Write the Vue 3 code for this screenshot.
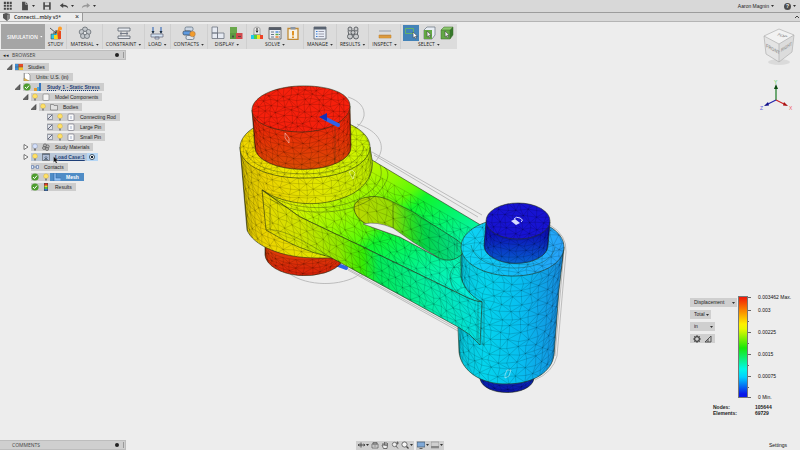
<script setup>
import { ref } from 'vue'

let seed = 7
const random = () => (seed = (seed * 16807) % 2147483647) / 2147483647

// Triangulated grid over a parametric surface, as one path string
function mesh(surface, cols, rows, jitter = 0.22) {
  const pts = []
  for (let r = 0; r <= rows; r++) {
    const line = []
    for (let c = 0; c <= cols; c++) {
      const du = c > 0 && c < cols ? (random() - 0.5) * 2 * jitter : 0
      const dv = r > 0 && r < rows ? (random() - 0.5) * 2 * jitter : 0
      const [x, y] = surface((c + du) / cols, (r + dv) / rows)
      line.push(x.toFixed(1) + ' ' + y.toFixed(1))
    }
    pts.push(line)
  }
  let d = ''
  for (let r = 0; r <= rows; r++) d += 'M' + pts[r].join('L')
  for (let c = 0; c <= cols; c++) d += 'M' + pts.map((l) => l[c]).join('L')
  for (let r = 0; r < rows; r++) {
    for (let c = 0; c < cols; c++) {
      d += (r + c) % 2
        ? `M${pts[r][c]}L${pts[r + 1][c + 1]}`
        : `M${pts[r][c + 1]}L${pts[r + 1][c]}`
    }
  }
  return d
}

// Front half of a cylinder between two ellipses [cx, cy, rx, ry]
const wall = (a, b) => (u, v) => {
  const t = Math.PI * (1 - u)
  const at = (e) => [e[0] + e[2] * Math.cos(t), e[1] + e[3] * Math.sin(t)]
  const p = at(a)
  const q = at(b)
  return [p[0] + (q[0] - p[0]) * v, p[1] + (q[1] - p[1]) * v]
}
const plane = (x, y, ax, ay, bx, by) => (u, v) => [x + ax * u + bx * v, y + ay * u + by * v]

const armTop = 'M262 190C285 205 320 209 350 195C364 188 374 176 372 160L484 227L478 246L461 250V275C461 284 470 296 482 302C476 302 472 300 468 298L363 247L300 217Z'
const armFront = 'M262 190L300 217L363 247L468 298Q474 301 482 302L480 345Q470 333 458 327L400 295L330 257Q298 250 266 230Z'
const slot = 'M354 208C354 202 360 198 368 197C378 195 388 199 393 202L413 212L457 240L463 245L462 254C455 261 446 262 437 257L400 237L380 230C368 226 355 220 354 208Z'

const lower = [
  { id: 'redBase', fill: 'url(#gRedBase)', d: 'M265 244V255A40 22 0 0 0 342 262V244Z', mesh: mesh(wall([304, 244, 39, 16], [304, 255, 39, 22]), 16, 4) },
  { id: 'blueBase', fill: 'url(#gBlueBase)', d: 'M480 372V379C484 397 530 397 534 379V372Z', mesh: mesh(wall([507, 370, 27, 16], [507, 377, 27, 16]), 12, 2) },
  { id: 'body', fill: 'url(#gBody)', d: 'M240 147L247 230C253 245 280 258 317 258L332 258L380 230L372 160L370 147Z', mesh: mesh(wall([305, 147, 65, 31], [312, 228, 65, 31]), 22, 12) },
  { id: 'hub', fill: 'url(#gHub)', d: 'M461 248L458 328L459 352C461 371 482 385 507 384C533 384 552 372 554 355L559 290L564 247Z', mesh: mesh(wall([513, 247, 51, 29], [507, 355, 48, 29]), 16, 15) },
  { id: 'armTop', fill: 'url(#gArm)', d: armTop, mesh: mesh(plane(262, 110, 240, 136, 0, 110), 34, 14, 0.3) },
  { id: 'armFront', fill: 'url(#gFront)', d: armFront, mesh: mesh(plane(262, 188, 220, 112, 3, 44), 30, 6) },
  { id: 'slot', fill: 'url(#gSlot)', d: slot, mesh: mesh(plane(350, 180, 115, 62, 0, 50), 13, 6) }
]

const upper = [
  { id: 'hubTop', fill: 'url(#gHubTop)', d: 'M461 247C461 231 484 218 513 218C542 218 564 231 564 247C564 263 542 276 513 276C484 276 461 263 461 247Z', mesh: mesh(plane(455, 215, 115, 0, 0, 64), 13, 9, 0.3) },
  { id: 'bluePin', fill: 'url(#gBluePin)', d: 'M486 222L484 245A32 18 0 0 0 548 246L550 222Z', mesh: mesh(wall([518, 222, 32, 18], [516, 245, 32, 18]), 12, 4) },
  { id: 'bluePinTop', fill: '#1713d2', d: 'M486 221A32 18 0 1 1 550 221A32 18 0 1 1 486 221Z', mesh: mesh(plane(484, 202, 68, 2, 0, 38), 9, 6, 0.3) },
  { id: 'collarWall', fill: 'url(#gBody)', plain: true, d: 'M370 147L372 160C373 176 355 192 325 196C302 199 280 195 268 190L240 147Z', mesh: mesh(wall([305, 147, 65, 31], [307, 163, 65, 33]), 24, 3) },
  { id: 'collarTop', fill: 'url(#gCollar)', d: 'M240 148C240 130 266 117 302 116C340 115 370 129 370 147C370 164 342 178 306 178C270 179 240 166 240 148Z', mesh: mesh(plane(236, 114, 138, -2, 0, 66), 23, 12, 0.3) },
  { id: 'redPin', fill: 'url(#gRed)', d: 'M252 110L255 148A48 22 0 0 0 351 147L350 106Z', mesh: mesh(wall([301, 109, 49, 23], [303, 147, 48, 22]), 18, 7) },
  { id: 'redPinTop', fill: '#f5200c', d: 'M252 111C251 98 272 87 299 86C328 85 350 93 350 106C350 120 329 131 303 132C275 132 253 124 252 111Z', mesh: mesh(plane(250, 85, 102, -2, 0, 49), 15, 9, 0.3) }
]

const icons = {
  grid: '<path d="M1 1h2.500v2.500H1zM4.500 1H7v2.500H4.500zM8 1h2.500v2.500H8zM1 4.500h2.500V7H1zM4.500 4.500H7V7H4.500zM8 4.500h2.500V7H8zM1 8h2.500v2.500H1zM4.500 8H7v2.500H4.500zM8 8h2.500v2.500H8z" fill="#444"/>',
  file: '<path d="M2.500 1h4l3 3v7h-7z" fill="#4a4a4a"/><path d="M6.500 1v3h3" stroke="#ddd" fill="none" stroke-width=".7"/>',
  save: '<path d="M1.500 1.500h9v9h-9z" fill="#4a4a4a"/><path d="M3.500 1.500h5v3.500h-5zM3.500 7h5v3.500h-5z" fill="#d8d8d8"/>',
  undo: '<path d="M1 5.500 5 2.500v2c4 0 6 1.500 6 4.500-1-2-3-2.500-6-2.500v2z" fill="#444"/>',
  redo: '<path d="M11 5.500 7 2.500v2c-4 0-6 1.500-6 4.500 1-2 3-2.500 6-2.500v2z" fill="#999"/>',
  study: '<path d="M2 8h5V5h4v8H2z" fill="#2fc7e8" stroke="#333" stroke-width=".5"/><path d="M5 9h3V6h3v7H5z" fill="#f6d51f"/><path d="M8 5h4v8H9z" fill="#e8481c"/><path d="m8 7 3-5" stroke="#e8801c" stroke-width="2"/><circle cx="11" cy="2.500" r="2" fill="#ff9b25"/><path d="m1 2 6 5M7 7V4M7 7H4" stroke="#333" stroke-width=".8" fill="none"/>',
  material: '<g fill="#c4c8cc" stroke="#666c72" stroke-width=".8"><circle cx="7" cy="3.600" r="2.600"/><circle cx="3.700" cy="6" r="2.500"/><circle cx="10.400" cy="6" r="2.500"/><circle cx="5" cy="10" r="2.500"/><circle cx="9" cy="10" r="2.500"/><circle cx="7" cy="7" r="1.800" fill="#e4e6e8"/></g>',
  constraint: '<path d="M1 2h12v3H1zM1 10h12v2.500H1z" fill="#e6e9ef" stroke="#59606b" stroke-width=".8"/><path d="M4 5.500v4M10 5.500v4M3 7.500h8" stroke="#6b7280" stroke-width=".9"/>',
  load: '<path d="M1 8h12v3H1zM5 11h4v2H5z" fill="#d4e4f4" stroke="#667" stroke-width=".7"/><path d="M3 1v6M11 1v6" stroke="#225bb0" stroke-width="1"/><path d="M1.500 5h3L3 8zM9.500 5h3L11 8z" fill="#234"/>',
  contacts: '<rect x="3" y="1" width="8" height="4" rx="1.500" fill="#cdd7e4" stroke="#567" stroke-width=".7"/><rect x="1" y="5" width="8" height="4" rx="1.500" fill="#5f9be0" stroke="#345" stroke-width=".7"/><rect x="4" y="9.500" width="8" height="4" rx="1.500" fill="#dfe5ec" stroke="#567" stroke-width=".7"/><circle cx="10.500" cy="8" r="2.800" fill="#f29c2c" stroke="#865" stroke-width=".4"/>',
  display: '<path d="M1 1h5.500v6H1zM1 7h5.500v5.500H1zM6.500 7H13v5.500H6.500z" fill="#e6eaf2" stroke="#6d7480" stroke-width=".8"/>',
  blocks: '<path d="M1 1h7v6H1z" fill="#6aa84c"/><path d="M1 7h6v6H1z" fill="#5c9a42"/><path d="M7 7h6.500v6H7z" fill="#d0494d"/><path d="M4 9v3M3 10.500h2M9 10.500h3" stroke="#444" stroke-width=".8"/>',
  solve: '<path d="M1 9h12v4H1z" fill="#20c8ef"/><path d="M4 9h3v4H4z" fill="#52d243"/><path d="M7 9h3v4H7z" fill="#f4df23"/><path d="M10 9h3v4h-3z" fill="#ed4327"/><path d="M3 8.500h8M4 8V3c0-2.500 6-2.500 6 0v5" fill="#e8e8e8" stroke="#888" stroke-width=".7"/><path d="M7 2v2" stroke="#222"/><path d="M5.500 4.500h3L7 7z" fill="#222"/>',
  table: '<path d="M1 1.500h12v11.500H1z" fill="#edf0f4" stroke="#555" stroke-width=".8"/><path d="M1 1.500h12V4H1z" fill="#555c68"/><path d="M3 6h3M3 8.500h3M3 11h3M11 6h1M11 8.500h1M11 11h1" stroke="#678" stroke-width="1.100"/><path d="M7.500 6h3" stroke="#4c8fe0" stroke-width="1.500"/><path d="M7.500 8.500h3" stroke="#5cae4c" stroke-width="1.500"/><path d="M7.500 11h3" stroke="#e97b2c" stroke-width="1.500"/>',
  report: '<path d="M2 2.500h10v11H2z" fill="#f7f2e5" stroke="#c18a35" stroke-width="1.300"/><path d="M4.500 1h5v2.500h-5z" fill="#8a97a8"/><path d="M7 5v4.500" stroke="#e09324" stroke-width="2"/><path d="M6 10.500h2v1.500H6z" fill="#e09324"/>',
  manage: '<path d="M1 1h12v12H1z" fill="#e8edf6" stroke="#555e6b" stroke-width=".8"/><path d="M1 1h12v2.500H1z" fill="#596371"/><path d="M3 5.500h1.500M3 8h1.500M3 10.500h1.500" stroke="#357bd2" stroke-width="1.200"/><path d="M5.500 5.500H11M5.500 8H11M5.500 10.500H11" stroke="#889" stroke-width=".8"/>',
  results: '<g fill="#c8cacc" stroke="#55595e" stroke-width=".9"><path d="M2 4.500 3 10M12 4.500 11 10M5 10h4"/><circle cx="4" cy="3" r="2"/><circle cx="10" cy="3" r="2"/><circle cx="7" cy="6.500" r="2"/><circle cx="4" cy="10.500" r="2.500"/><circle cx="10" cy="10.500" r="2.500"/></g>',
  inspect: '<path d="M1 4h12v2H1z" fill="#b9bdc3"/><path d="M1 9h12v3H1z" fill="#e7a33c" stroke="#b7782b" stroke-width=".5"/><path d="M3 9v1.500M5 9v1.500M7 9v1.500M9 9v1.500M11 9v1.500" stroke="#865" stroke-width=".5"/>',
  select: '<path d="M1.500 2.500h8v5h-8z" fill="none" stroke="#64b267" stroke-width="1"/><path d="m9 6 .200 6 1.400-1.200 1 2 .900-.500-1-2 1.800-.200z" fill="#fff" stroke="#333" stroke-width=".5"/>',
  cubeFace: '<path d="M2 4 5 1h8v8l-3 4H2z" fill="#e8edf4" stroke="#66717b" stroke-width=".7"/><path d="M2 4h8v9H2z" fill="#62a844"/><path d="m5 5 .200 6 1.300-1.200 1 2 .900-.500-1-2 1.800-.200z" fill="#eee" stroke="#333" stroke-width=".5"/>',
  cube: '<path d="M1 4h9v9H1z" fill="#62a844"/><path d="M1 4 4 1h9l-3 3z" fill="#8cc86f"/><path d="m10 4 3-3v8l-3 4z" fill="#36792b"/><path d="M1 4 4 1h9v8l-3 4H1zM1 4h9v9M10 4l3-3" fill="none" stroke="#3c692b" stroke-width=".5"/><path d="m5 5 .200 6 1.300-1.200 1 2 .900-.500-1-2 1.800-.200z" fill="#eee" stroke="#333" stroke-width=".5"/>',
  studies: '<path d="M0 1h3.500v6H0z" fill="#3f8fd5"/><path d="M3.500 1H8v3H3.500z" fill="#e64b26"/><path d="M3.500 4H8v3H3.500z" fill="#f0bd2a"/><path d="M0 4h8M3.500 1v6" stroke="#555" stroke-width=".5"/>',
  units: '<path d="M1.500 0H5l2 2v6H1.500z" fill="#fff" stroke="#777" stroke-width=".6"/><path d="M1 5v3h5z" fill="#e5b94f" stroke="#8d7433" stroke-width=".4"/>',
  check: '<circle cx="4" cy="4" r="3.600" fill="#4e9d2f"/><path d="m2 4 1.500 1.600L6 2.600" fill="none" stroke="#fff" stroke-width="1"/>',
  stress: '<path d="M0 5h3v3H0z" fill="#e49b32"/><path d="M3 4h2v4H3z" fill="#4fa8dc"/><path d="M5 0h2v8H5z" fill="#3775bd"/>',
  bulb: '<circle cx="4" cy="3.200" r="2.400" fill="#ffe168" stroke="#c8a63a" stroke-width=".4"/><path d="M3 5.500h2v2H3z" fill="#888"/>',
  bulbOff: '<circle cx="4" cy="3.200" r="2.400" fill="#d6e1fb" stroke="#7283a8" stroke-width=".4"/><path d="M3 5.500h2v2H3z" fill="#777"/>',
  part: '<rect x="1" y="1" width="6" height="6.500" rx="1" fill="#f4f4f4" stroke="#777" stroke-width=".6"/>',
  body: '<rect x="1" y="1" width="6" height="6.500" rx="1" fill="#fafafa" stroke="#667" stroke-width=".6"/><path d="M4 3v3" stroke="#7d8fb5" stroke-width=".7"/>',
  folder: '<path d="M.500 1.500h3l.500 1h3.500v4.500h-7z" fill="#e1e1e1" stroke="#666" stroke-width=".6"/>',
  materials: '<g fill="#bbb" stroke="#555" stroke-width=".7"><circle cx="3" cy="2.500" r="1.600"/><circle cx="2" cy="5" r="1.500"/><circle cx="5.600" cy="3.500" r="1.600"/><circle cx="5" cy="6" r="1.500"/></g>',
  loadcase: '<path d="M.500.500h7v7h-7z" fill="#aebdd6" stroke="#555" stroke-width=".6"/><path d="M.500 1.500h7M4 3v3M2.500 4.500 4 6l1.500-1.500M2 6.500h4" stroke="#345" stroke-width=".6" fill="none"/>',
  contact: '<path d="M.500 2.500h2v3h-2zM5.500 2.500h2v3h-2z" fill="#dce8fa" stroke="#5472a8" stroke-width=".6"/><path d="M3 4h2" stroke="#5472a8" stroke-width=".8"/>',
  mesh: '<path d="M1 0h2v5h5v3H1z" fill="#8fc0f3" stroke="#285f9d" stroke-width=".5"/>',
  results2: '<path d="M2 0h4v8H2z" fill="#444"/><path d="M2.500.500h3v2h-3z" fill="#ed3924"/><path d="M2.500 2.500h3v1.500h-3z" fill="#f6d82a"/><path d="M2.500 4h3v2h-3z" fill="#53c247"/><path d="M2.500 6h3v1.500h-3z" fill="#2c7be0"/>',
  orbit: '<path d="M1 4h7M4 1.500v5M2.500 3 1 4l1.500 1M6.500 3 8 4 6.500 5" stroke="#444" stroke-width=".9" fill="none"/>',
  look: '<path d="M1 3h6v4H1zM2 1.500h4V3H2z" fill="#ddd" stroke="#555" stroke-width=".7"/><path d="M2.500 5h3" stroke="#555" stroke-width=".7"/>',
  hand: '<path d="M2 4V2M3.500 4V1M5 4V1M6.500 4.500V2M2 4l-1 0 1.500 3.500h3.500l.500-3z" stroke="#555" fill="#eee" stroke-width=".8"/>',
  zoomDrag: '<circle cx="3.500" cy="3.500" r="2.200" fill="#eee" stroke="#555" stroke-width=".7"/><path d="m5 5 2 2.500M6.500.500v3M5 2h3" stroke="#555" stroke-width=".8"/>',
  zoom: '<circle cx="3.500" cy="3.500" r="2.600" fill="#f7f7f7" stroke="#555" stroke-width=".8"/><path d="m5.500 5.500 2 2" stroke="#444" stroke-width="1.200"/>',
  screen: '<path d="M0 1h8v5H0z" fill="#7fa9d8" stroke="#456" stroke-width=".7"/><path d="M2.500 7.500h3" stroke="#555" stroke-width=".9"/>',
  layout: '<path d="M0 1h8v6H0z" fill="#d0d0d0" stroke="#888" stroke-width=".6"/><path d="M0 5h8v2H0z" fill="#888"/>',
  gear: '<circle cx="4" cy="4" r="2.400" fill="none" stroke="#444" stroke-width="1.200"/><path d="M4 0v1.500M4 6.500V8M0 4h1.500M6.500 4H8M1.200 1.200l1 1M5.800 5.800l1 1M6.800 1.200l-1 1M2.200 5.800l-1 1" stroke="#444" stroke-width=".9"/>',
  angle: '<path d="M1 7h6V1zM4 7V4" fill="none" stroke="#444" stroke-width=".9"/>'
}

const quick = [
  { icon: 'grid', name: 'Data panel' },
  { icon: 'file', name: 'File', menu: true },
  { icon: 'save', name: 'Save' },
  { icon: 'undo', name: 'Undo', menu: true },
  { icon: 'redo', name: 'Redo', menu: true }
]

const tools = [
  { label: 'STUDY', icons: ['study'] },
  { label: 'MATERIAL', icons: ['material'], menu: true },
  { label: 'CONSTRAINT', icons: ['constraint'], menu: true },
  { label: 'LOAD', icons: ['load'], menu: true },
  { label: 'CONTACTS', icons: ['contacts'], menu: true },
  { label: 'DISPLAY', icons: ['display', 'blocks'], menu: true },
  { label: 'SOLVE', icons: ['solve', 'table', 'report'], menu: true },
  { label: 'MANAGE', icons: ['manage'], menu: true },
  { label: 'RESULTS', icons: ['results'], menu: true },
  { label: 'INSPECT', icons: ['inspect'], menu: true },
  { label: 'SELECT', icons: ['select', 'cubeFace', 'cube'], menu: true }
]

const tree = [
  { label: 'Studies', level: 0, open: true, icons: ['studies'] },
  { label: 'Units: U.S. (in)', level: 1, icons: ['units'] },
  { label: 'Study 1 - Static Stress', level: 1, open: true, icons: ['check', 'stress'], kind: 'active' },
  { label: 'Model Components', level: 2, open: true, icons: ['bulb', 'part'] },
  { label: 'Bodies', level: 3, open: true, icons: ['bulb', 'folder'] },
  { label: 'Connecting Rod', level: 4, tick: true, icons: ['bulb', 'body'] },
  { label: 'Large Pin', level: 4, tick: true, icons: ['bulb', 'body'] },
  { label: 'Small Pin', level: 4, tick: true, icons: ['bulb', 'body'] },
  { label: 'Study Materials', level: 2, open: false, icons: ['bulbOff', 'materials'] },
  { label: 'Load Case:1', level: 2, open: false, icons: ['bulb', 'loadcase'], kind: 'hover' },
  { label: 'Contacts', level: 2, icons: ['contact'] },
  { label: 'Mesh', level: 2, icons: ['check', 'bulb', 'mesh'], kind: 'selected' },
  { label: 'Results', level: 2, icons: ['check', 'results2'] }
]

const scale = [
  { text: '0.003462 Max.', span: 13 },
  { text: '0.003', span: 22, minor: true },
  { text: '0.00225', span: 22, minor: true },
  { text: '0.0015', span: 22, minor: true },
  { text: '0.00075', span: 21, minor: true },
  { text: '0 Min.', span: 0 }
]

const navigation = [
  [
    { icon: 'orbit', name: 'Orbit', menu: true },
    { icon: 'look', name: 'Look at' },
    { icon: 'hand', name: 'Pan' },
    { icon: 'zoomDrag', name: 'Zoom' },
    { icon: 'zoom', name: 'Fit', menu: true }
  ],
  [
    { icon: 'screen', name: 'Display settings', menu: true },
    { icon: 'layout', name: 'Viewports', menu: true }
  ]
]

const ticks = ref(['Connecting Rod', 'Large Pin', 'Small Pin'])
</script>

<template>
  <div class="app">
    <header class="titlebar">
      <button v-for="q in quick" :key="q.icon" class="plain quick" :aria-label="q.name">
        <svg class="i10" viewBox="0 0 12 12" v-html="icons[q.icon]"></svg>
        <span v-if="q.menu" class="caret"></span>
      </button>
      <span class="grow"></span>
      <button class="plain user">Aaron Magnin <span class="caret"></span></button>
      <button class="plain help" aria-label="Help">
        <span class="mark">?</span><span class="caret"></span>
      </button>
    </header>

    <nav class="tabs">
      <div class="tab">
        <svg class="i8" viewBox="0 0 8 8"><path d="M0 1 3 0l4 1v4L4 8 0 5z" fill="#555" /><path d="M4 2v6l3-3V1z" fill="#888" /></svg>
        <span class="tab-name">Connecti...mbly v3*</span>
        <button class="plain close" aria-label="Close tab">×</button>
      </div>
      <button class="plain collapse" aria-label="Collapse toolbar">
        <svg class="i6" viewBox="0 0 6 6"><path d="m1 4 2-2 2 2" fill="none" stroke="#444" /></svg>
      </button>
    </nav>

    <main class="workspace">
      <svg class="stage" viewBox="0 22 800 428" role="img" aria-label="Displacement results on the connecting rod">
        <defs>
          <linearGradient id="gRed" x1="0" y1="0" x2="0" y2="1"><stop offset=".3" stop-color="#ec2708" /><stop offset="1" stop-color="#d94b04" /></linearGradient>
          <linearGradient id="gRedBase" x1="0" y1="0" x2="0" y2="1"><stop offset="0" stop-color="#de4408" /><stop offset="1" stop-color="#d92008" /></linearGradient>
          <linearGradient id="gBody" gradientUnits="userSpaceOnUse" x1="240" y1="170" x2="375" y2="170"><stop offset="0" stop-color="#d3bc00" /><stop offset=".2" stop-color="#ecd400" /><stop offset=".6" stop-color="#e2e800" /><stop offset="1" stop-color="#b8ea00" /></linearGradient>
          <linearGradient id="gCollar" gradientUnits="userSpaceOnUse" x1="240" y1="130" x2="370" y2="150"><stop offset="0" stop-color="#f0d400" /><stop offset=".5" stop-color="#ecee00" /><stop offset="1" stop-color="#c6f500" /></linearGradient>
          <linearGradient id="gArm" gradientUnits="userSpaceOnUse" x1="262" y1="190" x2="409" y2="353"><stop offset="0" stop-color="#f2e800" /><stop offset=".16" stop-color="#d9f400" /><stop offset=".34" stop-color="#9af800" /><stop offset=".46" stop-color="#5cfa08" /><stop offset=".52" stop-color="#10f52c" /><stop offset=".66" stop-color="#04f56c" /><stop offset=".8" stop-color="#06f4a6" /><stop offset="1" stop-color="#06eee0" /></linearGradient>
          <linearGradient id="gFront" gradientUnits="userSpaceOnUse" x1="262" y1="0" x2="482" y2="0"><stop offset="0" stop-color="#e8d800" /><stop offset=".18" stop-color="#cde400" /><stop offset=".35" stop-color="#8fe800" /><stop offset=".46" stop-color="#35ea05" /><stop offset=".53" stop-color="#04e956" /><stop offset=".75" stop-color="#04eda0" /><stop offset="1" stop-color="#04dce4" /></linearGradient>
          <linearGradient id="gSlot" gradientUnits="userSpaceOnUse" x1="354" y1="0" x2="463" y2="0"><stop offset="0" stop-color="#bcd800" /><stop offset=".35" stop-color="#94dc04" /><stop offset=".52" stop-color="#30dc20" /><stop offset=".65" stop-color="#04d448" /><stop offset="1" stop-color="#06dc96" /></linearGradient>
          <linearGradient id="gHub" gradientUnits="userSpaceOnUse" x1="458" y1="0" x2="564" y2="0"><stop offset="0" stop-color="#08c4d8" /><stop offset=".25" stop-color="#05d4ec" /><stop offset=".6" stop-color="#08bdf0" /><stop offset="1" stop-color="#1688dc" /></linearGradient>
          <linearGradient id="gHubTop" gradientUnits="userSpaceOnUse" x1="461" y1="0" x2="564" y2="0"><stop offset="0" stop-color="#0cd8f2" /><stop offset=".5" stop-color="#12bdf8" /><stop offset="1" stop-color="#28a2fa" /></linearGradient>
          <linearGradient id="gBluePin" x1="0" y1="0" x2="0" y2="1"><stop offset=".3" stop-color="#0c12b8" /><stop offset="1" stop-color="#0660d0" /></linearGradient>
          <linearGradient id="gBlueBase" x1="0" y1="0" x2="0" y2="1"><stop offset="0" stop-color="#0838c8" /><stop offset="1" stop-color="#0c12a8" /></linearGradient>
          <clipPath v-for="s in [...lower, ...upper]" :id="'c-' + s.id" :key="s.id"><path :d="s.d" /></clipPath>
        </defs>

        <g class="ghost">
          <path d="M348 97C360 101 365 108 364 116C362 126 350 134 336 137" />
          <path d="M357 124C376 130 383 141 381 151C379 160 372 166 362 170M372 152L482 215M374 155L478 217" />
          <path d="M282 266C292 282 324 288 348 280Q358 277 362 271V276M332 260L460 330M348 270L458 331" />
          <path d="M550 225Q567 235 566 252L557 356Q553 372 535 380M548 228Q565 238 564 250L555 356" />
        </g>
        <path d="m338 265 8 3" class="arrow" />

        <g v-for="s in lower" :key="s.id">
          <path :d="s.d" :fill="s.fill" class="face" />
          <path :d="s.mesh" class="wires" :clip-path="'url(#c-' + s.id + ')'" />
        </g>

        <path class="gap" d="M363 224Q377 221 393 228L413 242L437 257L400 237L380 230Z" />
        <g class="edges">
          <path d="M393 202V228M457 240V252M460 262C449 268 446 281 457 292M264 204L270 208V229M266 230C280 228 300 238 330 257" />
          <path d="M478 300V343M484 300V346M262 190C290 214 345 212 368 193C378 185 384 178 380 165M270 199C300 220 358 214 377 194C390 180 390 172 384 167" />
        </g>

        <g v-for="s in upper" :key="s.id">
          <path :d="s.d" :fill="s.fill" :class="{ face: !s.plain }" />
          <path :d="s.mesh" class="wires" :clip-path="'url(#c-' + s.id + ')'" />
        </g>
        <g class="edges">
          <path d="M335 128V164M246 150C248 165 272 174 306 174C338 173 362 162 364 146M370 147L372 160" />
          <path d="M471 245C474 260 492 268 514 268C536 268 553 260 555 247" />
        </g>

        <path d="m324 118 14 7" class="arrow" />
        <path d="m319 117 8-4 0 8z" fill="#1230b8" />
        <g class="tags">
          <path d="M285 133v5l4 5v-5zM349 172l3-2 3 3-2 6zM505 375l2-5h4l-2 6-4 2z" />
        </g>
        <path d="m511 221 4-2 5 4-4 2z" class="lock-body" />
        <path d="M514 219q2-3 6-1 4 2 1 4" class="lock-ring" />
      </svg>

      <div class="left">
        <div class="toolbar">
          <button class="workspace-switch">SIMULATION <span class="caret light"></span></button>
          <div v-for="t in tools" :key="t.label" class="group">
            <div class="group-icons">
              <button v-for="i in t.icons" :key="i" class="plain tool" :class="{ on: i === 'select' }" :aria-label="t.label">
                <svg class="i14" viewBox="0 0 14 14" v-html="icons[i]"></svg>
              </button>
            </div>
            <div class="group-label">{{ t.label }}<span v-if="t.menu" class="caret"></span></div>
          </div>
        </div>

        <section class="browser">
          <div class="panel-head">
            <span class="rewind">◂◂</span><span>BROWSER</span><span class="grow"></span>
            <button class="plain dot" aria-label="Browser options"></button><span class="grip"></span>
          </div>
          <ul class="tree">
            <li v-for="n in tree" :key="n.label" :class="['node', 'l' + n.level, n.kind]">
              <button v-if="n.open !== undefined" class="plain twist" :aria-label="'Toggle ' + n.label">
                <svg class="i6" viewBox="0 0 6 6">
                  <path v-if="n.open" d="M5 .5v5H0z" fill="#666" stroke="#333" stroke-width=".6" />
                  <path v-else d="M1 .5 5 3 1 5.500z" fill="#fff" stroke="#444" stroke-width=".7" />
                </svg>
              </button>
              <span v-else class="twist"></span>
              <label class="chip">
                <input v-if="n.tick" v-model="ticks" type="checkbox" :value="n.label" />
                <svg v-for="i in n.icons" :key="i" class="i8" viewBox="0 0 8 8" v-html="icons[i]"></svg>
                <span class="name">{{ n.label }}</span>
              </label>
              <span v-if="n.kind === 'hover'" class="target"><i></i></span>
              <svg v-if="n.kind === 'hover'" class="pointer" viewBox="0 0 6 8"><path d="M.500.500v6l1.500-1.300 1 2.300 1.200-.500-1-2.200H5.500z" fill="#111" stroke="#eee" stroke-width=".3" /></svg>
            </li>
          </ul>
        </section>
      </div>

      <aside class="right">
        <svg class="viewcube" viewBox="0 0 34 40" role="img" aria-label="View cube">
          <ellipse cx="17" cy="34" rx="11" ry="3" fill="#dadada" />
          <path d="M2 8 17 1l15 6-15 9z" fill="#f2f2f2" />
          <path d="M2 8 17 16v18L4 26z" fill="#e4e4e4" />
          <path d="M32 7 17 16v18l13-10z" fill="#dcdcdc" />
          <path d="M2 8 17 1l15 6-2 17-13 10L4 26zM2 8l15 8 15-9M17 16v18" fill="none" stroke="#b0b0b0" stroke-width=".7" />
          <text class="cube-text" transform="matrix(.8 .45 0 1 4 19)">FRONT</text>
          <text class="cube-text" transform="matrix(.7 -.45 0 1 19 24)">RIGHT</text>
          <text class="cube-text" transform="matrix(.9 .3 -.8 .5 14 7)">TOP</text>
        </svg>
        <svg class="axes" viewBox="0 0 36 32" role="img" aria-label="Axes">
          <path d="M18 20V8" stroke="#187a20" stroke-width="1.200" /><path d="m16 9 2-5 2 5z" fill="#0b4a12" />
          <path d="m18 20 8 4" stroke="#c22" stroke-width="1.200" /><path d="m26 22 4 4-5-.500z" fill="#a11" />
          <path d="m18 20-8 4" stroke="#22a" stroke-width="1.200" /><path d="m10 22-4 4 5-.500z" fill="#118" />
          <text x="16" y="4" fill="#3fd04a">Y</text><text x="31" y="30" fill="#f06060">X</text><text x="2" y="30" fill="#6060d8">Z</text>
        </svg>
        <span class="grow"></span>
        <section class="legend">
          <div class="controls">
            <span class="pick wide"><select aria-label="Result"><option>Displacement</option></select></span>
            <span class="pick short"><select aria-label="Component"><option>Total</option></select></span>
            <span class="pick medium"><select aria-label="Unit"><option>in</option></select></span>
            <span class="pair">
              <button class="plain" aria-label="Legend options"><svg class="i8" viewBox="0 0 8 8" v-html="icons.gear"></svg></button>
              <button class="plain" aria-label="Deformation scale"><svg class="i8" viewBox="0 0 8 8" v-html="icons.angle"></svg></button>
            </span>
          </div>
          <div class="bar"></div>
          <ul class="scale">
            <li v-for="s in scale" :key="s.text" :class="{ minor: s.minor }" :style="{ flexGrow: s.span }">{{ s.text }}</li>
          </ul>
        </section>
        <dl class="stats">
          <dt>Nodes:</dt><dd>105644</dd>
          <dt>Elements:</dt><dd>69729</dd>
        </dl>
      </aside>

      <footer class="bottom">
        <div class="panel-head comments">
          <span>COMMENTS</span><span class="grow"></span>
          <button class="plain dot" aria-label="Add comment"></button><span class="grip"></span>
        </div>
        <div class="navbar">
          <div v-for="(g, k) in navigation" :key="k" class="navgroup">
            <button v-for="b in g" :key="b.icon" class="plain nav" :aria-label="b.name">
              <svg class="i8" viewBox="0 0 8 8" v-html="icons[b.icon]"></svg><span v-if="b.menu" class="caret"></span>
            </button>
          </div>
        </div>
        <button class="plain settings">Settings</button>
      </footer>
    </main>
  </div>
</template>

<style>
body { margin: 0; background: #ededed; }
</style>

<style scoped>
.app { min-height: 100vh; display: flex; flex-direction: column; background: #ededed; color: #222; font: 5px/8px "Liberation Sans", Arial, sans-serif; }
.app * { box-sizing: border-box; }
.plain { border: 0; padding: 0; margin: 0; background: none; font: inherit; color: inherit; display: flex; align-items: center; }
.grow { flex: 1; }
ul, dl, dd { margin: 0; padding: 0; list-style: none; }
svg { display: block; flex: none; }
.i6 { width: 6px; height: 6px; }
.i8 { width: 8px; height: 8px; }
.i10 { width: 10px; height: 10px; }
.i14 { width: 14px; height: 14px; }
.caret { display: inline-block; flex: none; width: 3px; height: 2px; margin-left: 2px; background: #333; clip-path: polygon(0 0, 100% 0, 50% 100%); vertical-align: middle; }
.caret.light { background: #fff; }

.titlebar { height: 13px; display: flex; align-items: center; gap: 7px; padding: 0 4px 0 3px; background: #d8d8d8; border-bottom: 1px solid #9c9c9c; }
.user { margin-right: 3px; }
.mark { width: 7px; height: 7px; border-radius: 50%; background: #4d4d4d; color: #fff; font-weight: bold; line-height: 7px; text-align: center; }

.tabs { height: 9px; display: flex; justify-content: space-between; background: #d8d8d8; border-bottom: 1px solid #b4b4b4; }
.tab { display: flex; align-items: center; gap: 3px; padding: 0 3px; background: #ececec; border-right: 1px solid #999; }
.tab-name { font: 600 5px/8px "Open Sans", sans-serif; width: 58px; white-space: nowrap; }
.close { font-size: 7px; }

.workspace { position: relative; flex: 1; display: grid; grid-template-columns: minmax(0, 1fr) auto; grid-template-rows: 1fr auto; }
.stage { position: absolute; inset: 0; width: 100%; height: 100%; }
.left, .right, .bottom { position: relative; }
.left { padding-top: 2px; }

.toolbar { display: flex; width: max-content; margin-left: 1px; height: 25px; background: #dcdcdc; }
.workspace-switch { display: flex; align-items: center; border: 0; padding: 0 2px 0 6px; background: #a5a5a5; color: #fff; font: 600 5px/8px "Open Sans", sans-serif; }
.group { display: flex; flex-direction: column; align-items: center; padding: 2px 3px 0; border-right: 1px solid #cfcfcf; }
.group:last-child { border-right: 0; }
.group-icons { display: flex; gap: 4px; }
.tool.on { background: #4483b8; box-shadow: 0 0 0 1px #4483b8; }
.group-label { font: 5px/8px "Open Sans", sans-serif; white-space: nowrap; }

.browser { width: 126px; padding-top: 1px; }
.panel-head { display: flex; align-items: center; height: 10px; padding: 0 1px 0 3px; background: #cfcfcf; border: 1px solid #bdbdbd; border-left: 0; font: 5px/8px "Open Sans", sans-serif; color: #444; }
.rewind { width: 9px; color: #222; }
.dot { width: 4px; height: 4px; border-radius: 50%; background: #222; }
.grip { width: 1px; height: 6px; margin-left: 4px; background: #999; }

.tree { display: flex; flex-direction: column; gap: 2px; padding: 3px 0 0 7px; }
.node { position: relative; display: flex; align-items: center; height: 8px; width: max-content; }
.l1 { padding-left: 8px; }
.l2 { padding-left: 16px; }
.l3 { padding-left: 24px; }
.l4 { padding-left: 32px; }
.twist { width: 8px; flex: none; }
.chip { display: flex; align-items: center; gap: 3px; height: 8px; background: #cdcdcd; white-space: nowrap; }
.chip input { appearance: none; width: 6px; height: 6px; margin: 0; border: 1px solid #9a9fa9; background: #dfe2e8; }
.chip input:checked { background: linear-gradient(135deg, #dfe2e8 40%, #667 40%, #667 60%, #dfe2e8 60%); }
.name { padding: 0 4px 0 2px; }
.active .name { font-weight: bold; color: #1e3f77; text-decoration: underline dotted; }
.hover .name { font-weight: bold; color: #1e3f77; padding-right: 2px; text-decoration: underline; }
.hover .chip { background: #b9c7d8; }
.selected .chip { background: linear-gradient(90deg, #cdcdcd 19px, #4f8cc6 19px); color: #fff; }
.selected .name { font-weight: bold; padding-right: 5px; }
.target { width: 11px; height: 8px; display: grid; place-items: center; background: #b5d6f5; }
.target i { width: 6px; height: 6px; border: 1px solid #456; border-radius: 50%; background: radial-gradient(#123 30%, #fff 35%); }
.pointer { position: absolute; left: 46px; top: 3px; width: 6px; height: 8px; }

.right { display: flex; flex-direction: column; align-items: flex-end; padding: 6px 4px 0 0; }
.viewcube { width: 34px; height: 40px; }
.cube-text { font: bold 5px "Liberation Sans", sans-serif; fill: #999; }
.axes { width: 36px; height: 32px; margin-top: 12px; margin-right: 2px; overflow: visible; }
.axes text { font: 5px "Liberation Sans", sans-serif; }

.legend { display: flex; width: 106px; height: 102px; }
.controls { width: 48px; padding-top: 2px; display: flex; flex-direction: column; gap: 3px; }
.pick { position: relative; display: flex; height: 9px; background: #cfcfcf; }
.pick select { appearance: none; width: 100%; border: 0; padding: 0 0 0 4px; margin: 0; background: none; color: #222; font: inherit; line-height: 9px; }
.pick::after { content: ""; position: absolute; right: 2px; top: 4px; width: 3px; height: 2px; background: #333; clip-path: polygon(0 0, 100% 0, 50% 100%); pointer-events: none; }
.wide { width: 47px; }
.short { width: 21px; }
.medium { width: 25px; }
.pair { display: flex; justify-content: space-evenly; width: 25px; height: 9px; background: #cfcfcf; }
.bar { width: 10px; border: 1px solid #777; background: linear-gradient(#f01808, #f86a00 10%, #fff000 27%, #e8f800 32%, #18e808 51%, #00f8e8 72%, #00d0ff 80%, #0818e8 97%); }
.scale { flex: 1; display: flex; flex-direction: column; padding: 1px 0; color: #111; white-space: nowrap; }
.scale li { position: relative; flex: 0 0 0; line-height: 0; padding-left: 10px; }
.scale li::before { content: ""; position: absolute; left: 0; top: 0; width: 3px; height: 1px; background: #666; }
.scale li.minor::after { content: ""; position: absolute; left: 0; top: 50%; width: 1px; height: 1px; background: #666; }
.stats { display: grid; grid-template-columns: 42px 41px; margin: 6px 0 24px; line-height: 6px; font-weight: bold; }

.bottom { grid-column: 1 / -1; display: grid; grid-template-columns: 1fr auto 1fr; align-items: center; height: 10px; }
.comments { width: 126px; padding-left: 12px; }
.navbar { display: flex; gap: 2px; }
.navgroup { display: flex; gap: 2px; padding: 0 1px; height: 9px; background: #cfcfcf; }
.nav .caret { margin-left: 1px; }
.settings { justify-self: end; margin-right: 13px; color: #111; }

.face { stroke: #26331a; stroke-width: .6; }
.wires { fill: none; stroke: #000; stroke-opacity: .36; stroke-width: .4; }
.edges path { fill: none; stroke: #20301a; stroke-width: .5; stroke-opacity: .7; }
.ghost path { fill: none; stroke: #b0b0b0; stroke-width: .8; }
.gap { fill: #ededed; stroke: #444; stroke-width: .5; }
.arrow { fill: none; stroke: #2f62e8; stroke-width: 4; stroke-linecap: round; }
.tags path { fill: none; stroke: #fff; stroke-opacity: .55; stroke-width: .8; }
.lock-body { fill: #d8dcff; }
.lock-ring { fill: none; stroke: #d8dcff; stroke-width: 1; }
</style>
